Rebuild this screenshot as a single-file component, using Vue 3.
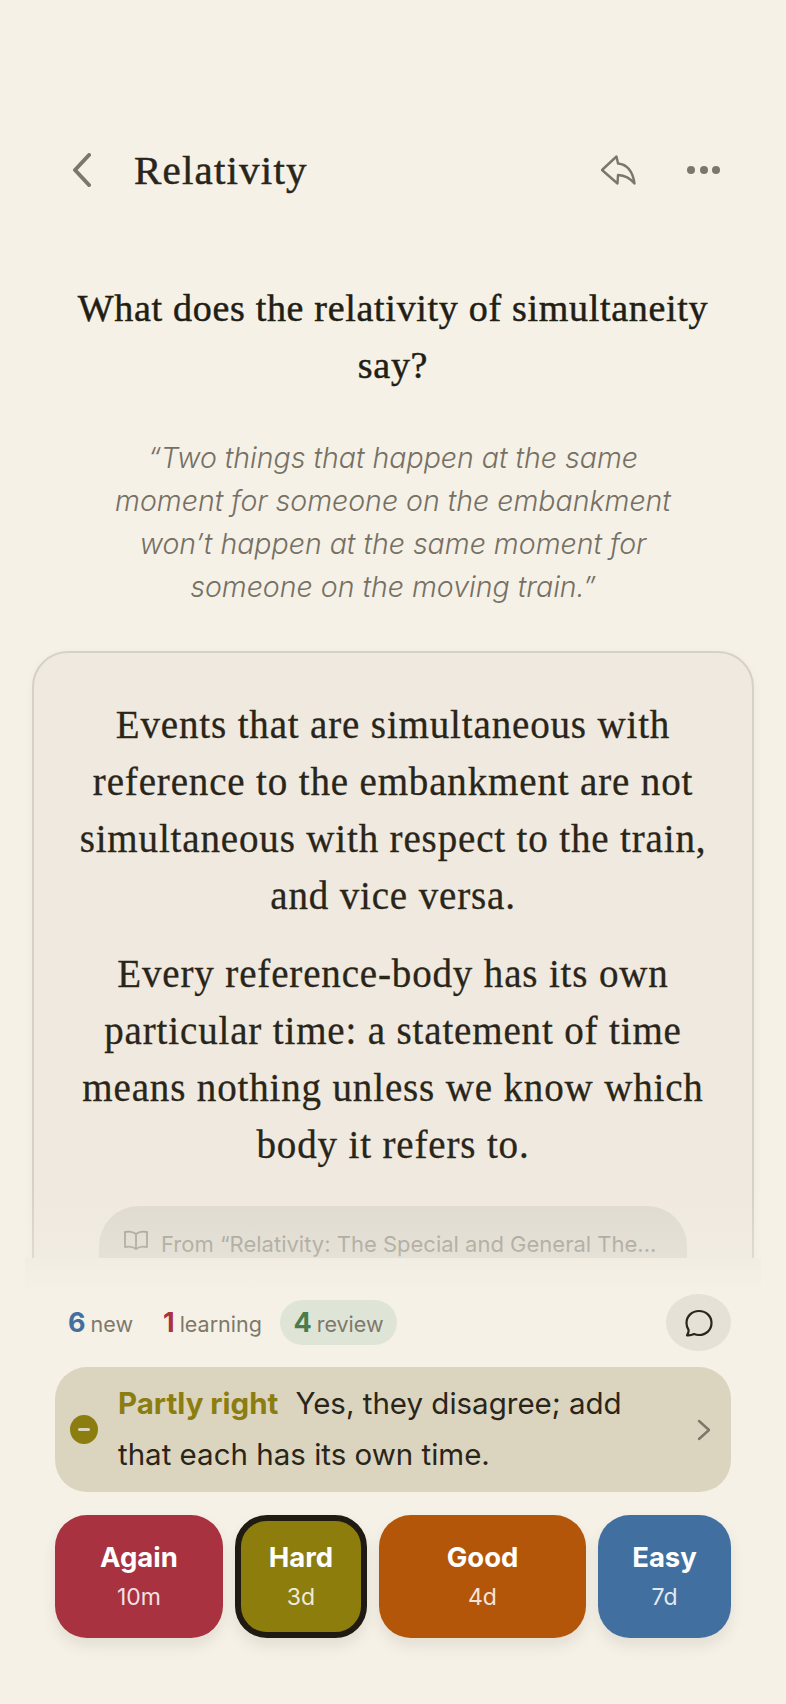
<script setup>
const counts = [
  { n: 6, label: 'new', cls: 'blue' },
  { n: 1, label: 'learning', cls: 'red' },
  { n: 4, label: 'review', cls: 'green', active: true },
]
const grades = [
  { label: 'Again', time: '10m', cls: 'again' },
  { label: 'Hard', time: '3d', cls: 'hard' },
  { label: 'Good', time: '4d', cls: 'good' },
  { label: 'Easy', time: '7d', cls: 'easy' },
]
</script>

<template>
  <div class="page">
    <div class="scroll">
      <header class="head">
        <svg class="back" width="20" height="34" viewBox="0 0 20 34"><path d="M17 2 L3 17 L17 32" /></svg>
        <h1 class="title">Relativity</h1>
        <svg class="reply" width="35" height="31" viewBox="0 0 35 31"><path d="M1 15 L15.5 1.5 L17 8.5 C27 9.5 32 18 33.500 28.500 C29 23 24 20.500 17 20 L16.500 28.500 Z" /></svg>
        <div class="dots"><i></i><i></i><i></i></div>
      </header>

      <h2 class="question">What does the relativity of simultaneity<br />say?</h2>
      <p class="quote">“Two things that happen at the same<br />moment for someone on the embankment<br />won’t happen at the same moment for<br />someone on the moving train.”</p>

      <section class="card">
        <p>Events that are simultaneous with<br />reference to the embankment are not<br />simultaneous with respect to the train,<br />and vice versa.</p>
        <p>Every reference-body has its own<br />particular time: a statement of time<br />means nothing unless we know which<br />body it refers to.</p>
        <div class="source">
          <svg width="26" height="20" viewBox="0 0 26 20"><path d="M13 4 C10 1.500 6 1.200 2 2 V17 C6 16.200 10 16.500 13 19 C16 16.500 20 16.200 24 17 V2 C20 1.200 16 1.500 13 4 Z M13 4 V19" /></svg>
          <span>From “Relativity: The Special and General The...</span>
        </div>
      </section>
      <div class="fade"></div>
    </div>

    <div class="panel">
      <div class="tail"></div>
      <div class="stats">
        <div v-for="c in counts" :key="c.label" class="stat" :class="{ active: c.active }">
          <b :class="c.cls">{{ c.n }}</b><span>{{ c.label }}</span>
        </div>
        <button class="chat">
          <svg width="28" height="28" viewBox="0 0 28 28"><path d="M14 2 C21 2 26.500 7 26.500 14 C26.500 21 21 26 14 26 C12 26 10.500 25.600 9 25 C7 26 4 26.500 2 26.300 C3 25 3.800 23.500 3.600 21 C2.200 19 1.500 16.500 1.500 14 C1.500 7 7 2 14 2 Z" /></svg>
        </button>
      </div>

      <div class="verdict">
        <span class="minus"><i></i></span>
        <p><b>Partly right</b>Yes, they disagree; add<br />that each has its own time.</p>
        <svg class="next" width="14" height="22" viewBox="0 0 14 22"><path d="M2 2 L12 11 L2 20" /></svg>
      </div>

      <div class="grades">
        <button v-for="g in grades" :key="g.label" class="grade" :class="g.cls">
          <strong>{{ g.label }}</strong>
          <small>{{ g.time }}</small>
        </button>
      </div>
    </div>
  </div>
</template>

<style>
html, body { margin: 0; background: #f5f1e7; }
</style>

<style scoped>
.page {
  width: 786px;
  height: 1704px;
  background: #f5f1e7;
  overflow: hidden;
  display: flex;
  flex-direction: column;
  font-family: Inter, Lato, sans-serif;
}
.scroll {
  position: relative;
  height: 1258px;
  flex: none;
  overflow: hidden;
  padding: 140px 32px 0;
  box-sizing: border-box;
}
.fade {
  position: absolute;
  left: 0;
  right: 0;
  bottom: 0;
  height: 70px;
  background: linear-gradient(to bottom, rgba(245, 241, 231, 0), rgba(245, 241, 231, 0.3));
}
.head {
  height: 60px;
  display: flex;
  align-items: center;
  padding: 0 0 0 40px;
}
.back { fill: none; stroke: #7c766b; stroke-width: 4; stroke-linecap: round; stroke-linejoin: round; margin-right: 42px; }
.title {
  margin: 0;
  font: 400 41px/60px "Liberation Serif", serif;
  color: #2a2519;
  letter-spacing: 1.2px;
  -webkit-text-stroke: 0.5px #2a2519;
  flex: 1;
}
.reply { fill: none; stroke: #7c766b; stroke-width: 2.4; stroke-linejoin: round; margin-right: 51px; }
.dots { display: flex; gap: 4.500px; margin-right: 34px; }
.dots i { width: 8px; height: 8px; border-radius: 50%; background: #7c766b; }
.question {
  margin: 80px 0 0;
  text-align: center;
  font: 400 38px/57px "Liberation Serif", serif;
  color: #221e14;
  letter-spacing: 0.7px;
  -webkit-text-stroke: 0.5px #221e14;
}
.quote {
  margin: 42px 0 0;
  text-align: center;
  font: italic 300 28.500px/43px Inter, Lato, sans-serif;
  color: #767064;
}
.card {
  margin-top: 43px;
  height: 700px;
  box-sizing: border-box;
  border: 2px solid #d5d1c6;
  border-radius: 36px;
  background: #efe9df;
  box-shadow: 0 2px 10px rgba(60, 50, 30, 0.04);
  padding: 43px 20px 0;
  text-align: center;
}
.card p {
  margin: 0 0 21px;
  font: 400 39px/57px "Liberation Serif", serif;
  color: #2a2519;
  letter-spacing: 0.85px;
  -webkit-text-stroke: 0.3px #2a2519;
}
.source {
  margin: 33px 45px 0;
  height: 80px;
  border-radius: 40px;
  background: #dedad0;
  display: flex;
  align-items: flex-start;
  padding: 24px 24px 0;
  gap: 12px;
  color: #a09c91;
  font-size: 22px;
  line-height: 28px;
  white-space: nowrap;
}
.source svg { fill: none; stroke: #a09c91; stroke-width: 1.800; stroke-linejoin: round; flex: none; }
.panel {
  flex: 1;
  padding: 0 55px 0 55px;
}
.tail {
  height: 36px;
  margin: 0 -30px 0 -30px;
  background: linear-gradient(to bottom, #f1ede3, #f5f1e7);
}
.stats {
  display: flex;
  align-items: center;
  height: 57px;
  gap: 16px;
  padding-left: 13px;
}
.stat {
  display: flex;
  align-items: baseline;
  gap: 5px;
  font-size: 21.500px;
  color: #7e786c;
  height: 45px;
  line-height: 45px;
  margin-right: 14px;
}
.stat b { font-size: 27px; font-weight: 700; }
.stat.active {
  background: #dfe5d6;
  padding: 0 13px;
  border-radius: 23px;
  margin-left: -11.500px;
}
.blue { color: #416f9f; }
.red { color: #a93240; }
.green { color: #4b7d4c; }
.chat {
  margin-left: auto;
  width: 65px;
  height: 57px;
  border: 0;
  padding: 0;
  border-radius: 50%;
  background: #e6e1d7;
  display: flex;
  align-items: center;
  justify-content: center;
}
.chat svg { fill: none; stroke: #2a2519; stroke-width: 2.200; stroke-linejoin: round; }
.verdict {
  margin-top: 16px;
  height: 125px;
  background: #dbd4bf;
  border-radius: 32px;
  display: flex;
  align-items: center;
  padding: 0 20px 0 15px;
}
.minus {
  width: 28px;
  height: 29px;
  border-radius: 50%;
  background: #8b7d0f;
  display: flex;
  align-items: center;
  justify-content: center;
  flex: none;
}
.minus i { width: 12px; height: 3px; border-radius: 2px; background: #dbd4bf; }
.verdict p {
  margin: -1px 0 0 20px;
  flex: 1;
  font-size: 29.500px;
  line-height: 51px;
  color: #2a2519;
}
.verdict b { color: #8b7d0f; font-weight: 700; margin-right: 17px; }
.next { fill: none; stroke: #7c766b; stroke-width: 2.400; stroke-linecap: round; stroke-linejoin: round; }
.grades {
  margin-top: 23px;
  display: flex;
  gap: 12px;
}
.grade {
  height: 123px;
  border: 0;
  border-radius: 32px;
  box-sizing: border-box;
  display: flex;
  flex-direction: column;
  align-items: center;
  justify-content: center;
  color: #fff;
  font-family: inherit;
  box-shadow: 0 8px 14px rgba(80, 65, 40, 0.1);
}
.grade strong { font-size: 27.500px; font-weight: 700; line-height: 42px; }
.grade small { font-size: 23px; line-height: 39px; opacity: 0.85; }
.again { width: 168px; background: #a93240; }
.hard { width: 132px; background: #8c7d0d; border: 6px solid #1f1b12; }
.good { width: 207px; background: #b45609; }
.easy { width: 133px; background: #416f9f; }
</style>
